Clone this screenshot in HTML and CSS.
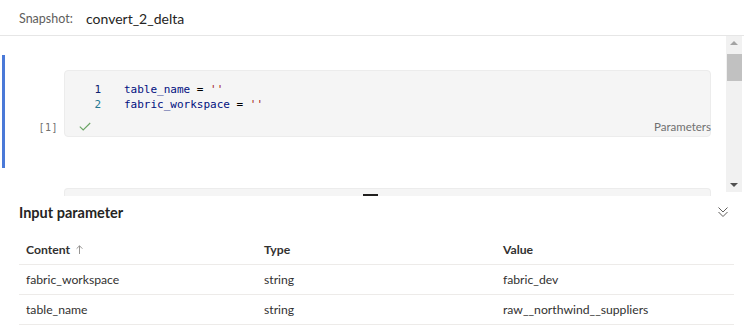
FILE: index.html
```html
<!DOCTYPE html>
<html>
<head>
<meta charset="utf-8">
<link rel="stylesheet" href="styles.css">
</head>
<body>
<div class="page">
  <header class="header">
    <span class="snap-label">Snapshot:</span>
    <span class="snap-name">convert_2_delta</span>
  </header>

  <section class="notebook">
    <div class="cells">
      <div class="cell cell-active">
        <div class="exec-count">[1]</div>
        <div class="cell-box">
          <div class="code">
            <div class="line"><span class="ln ln-active">1</span><span class="src"><span class="var">table_name</span> <span class="op">=</span> <span class="str">''</span></span></div>
            <div class="line"><span class="ln">2</span><span class="src"><span class="var">fabric_workspace</span> <span class="op">=</span> <span class="str">''</span></span></div>
          </div>
          <div class="cell-foot">
            <svg class="check" width="12" height="9" viewBox="0 0 12 9"><path d="M0.8 4.6 L4.2 8 L11.2 1" fill="none" stroke="#6aa464" stroke-width="1.1"/></svg>
            <span class="tag">Parameters</span>
          </div>
        </div>
      </div>
      <div class="cell cell-next">
        <div class="exec-count"></div>
        <div class="cell-box cell-box-next"></div>
      </div>
    </div>
    <div class="scrollbar">
      <svg class="sb-arrow" width="16" height="14" viewBox="0 0 16 14"><path d="M4 9 L8 5 L12 9 Z" fill="#a3a3a3"/></svg>
      <div class="sb-thumb"></div>
      <div class="sb-track"></div>
      <svg class="sb-arrow" width="16" height="14" viewBox="0 0 16 14"><path d="M4 5 L12 5 L8 9 Z" fill="#505050"/></svg>
    </div>
    <div class="splitter"></div>
  </section>

  <section class="panel">
    <div class="panel-head">
      <h2 class="panel-title">Input parameter</h2>
      <svg class="chev" width="12" height="12" viewBox="0 0 12 12"><path d="M1.5 1.5 L6 6 L10.5 1.5 M1.5 6 L6 10.5 L10.5 6" fill="none" stroke="#605e5c" stroke-width="1"/></svg>
    </div>
    <div class="table">
      <div class="row row-head">
        <div class="c c1">Content <svg class="sort" width="7" height="9" viewBox="0 0 7 9"><path d="M3.5 0.8 V9 M0.6 3.7 L3.5 0.8 L6.4 3.7" fill="none" stroke="#8a8886" stroke-width="0.9"/></svg></div>
        <div class="c c2">Type</div>
        <div class="c c3">Value</div>
      </div>
      <div class="row">
        <div class="c c1">fabric_workspace</div>
        <div class="c c2">string</div>
        <div class="c c3">fabric_dev</div>
      </div>
      <div class="row">
        <div class="c c1">table_name</div>
        <div class="c c2">string</div>
        <div class="c c3">raw__northwind__suppliers</div>
      </div>
    </div>
  </section>
</div>
</body>
</html>
```

FILE: styles.css
```css
* { box-sizing: border-box; }
html, body { margin: 0; padding: 0; background: #fff; }
body {
  font-family: "Lato", "Open Sans", sans-serif;
  color: #323130;
  width: 744px;
  height: 330px;
  overflow: hidden;
}
.page { width: 744px; height: 330px; }

.header {
  height: 36px;
  border-bottom: 1px solid #e6e6e6;
  display: flex;
  align-items: center;
  padding-left: 19px;
  padding-top: 2px;
}
.snap-label { font-size: 12.5px; color: #605e5c; width: 67px; }
.snap-name { font-size: 14px; color: #252423; }

.notebook {
  position: relative;
  height: 160px;
  display: flex;
  background: #fff;
}
.cells { flex: 1; overflow: hidden; padding-top: 19px; }
.cell { display: flex; }
.cell-active {
  border-left: 3px solid #4a79d8;
  margin-left: 2px;
  padding: 15px 0 31px 0;
  height: 113px;
}
.exec-count {
  width: 59px;
  font-family: "DejaVu Sans Mono", monospace;
  font-size: 10px;
  color: #707070;
  display: flex;
  align-items: flex-end;
  justify-content: flex-end;
  padding-right: 6px;
  padding-bottom: 4px;
  letter-spacing: 0.5px;
}
.cell-box {
  width: 647px;
  background: #f5f5f5;
  border: 1px solid #ececec;
  border-radius: 4px;
  padding-top: 11px;
}
.cell-next { margin-left: 5px; margin-top: 20px; }
.cell-box-next { height: 30px; border-bottom: none; border-radius: 4px 4px 0 0; }

.code { font-family: "DejaVu Sans Mono", monospace; font-size: 11px; }
.line { display: flex; height: 15px; line-height: 15px; }
.ln { width: 36px; text-align: right; color: #237893; }
.ln-active { color: #0b216f; }
.src { margin-left: 23px; white-space: pre; }
.var { color: #001080; }
.op { color: #000; }
.str { color: #a31515; }

.cell-foot {
  height: 20px;
  margin-top: 4px;
  display: flex;
  align-items: center;
  justify-content: space-between;
  padding-left: 14px;
}
.check { display: block; }
.tag { font-size: 11.5px; color: #707070; margin-right: -1px; }

.scrollbar {
  width: 16px;
  margin-right: 2px;
  height: 156px;
  background: #f1f1f1;
  display: flex;
  flex-direction: column;
}
.sb-arrow { display: block; flex: none; }
.sb-thumb { height: 27px; margin: 4px 0 0 1px; background: #c1c1c1; }
.sb-track { flex: 1; }

.splitter {
  position: absolute;
  left: 363px;
  top: 158px;
  width: 15px;
  height: 2px;
  background: #201f1e;
}

.panel { padding: 0 10px 0 19px; }
.panel-head {
  height: 38px;
  display: flex;
  align-items: center;
  justify-content: space-between;
  padding-right: 5px;
  padding-bottom: 6px;
}
.panel-title { margin: 0; font-size: 14.5px; font-weight: 700; color: #252423; }
.chev { display: block; }

.table { margin-top: 1px; width: 715px; }
.row {
  display: flex;
  height: 30px;
  align-items: center;
  border-bottom: 1px solid #edebe9;
  font-size: 12.2px;
}
.row-head { font-weight: 700; }
.c { padding-left: 7px; display: flex; align-items: center; }
.c1 { width: 238px; }
.c2 { width: 239px; }
.c3 { flex: 1; }
.sort { display: block; margin-left: 6px; }
```
